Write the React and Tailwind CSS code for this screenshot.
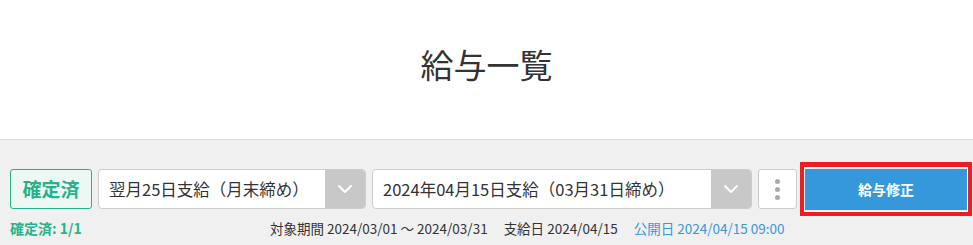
export default function App() {
  const font = { fontFamily: '"Noto Sans CJK JP", "Noto Sans", sans-serif' };
  return (
    <div className="w-[973px] h-[245px] bg-[#f0f0f0] overflow-hidden" style={font}>
      <div className="h-[140px] bg-white border-b border-[#dcdcdc] flex items-center justify-center pb-[10px]">
        <h1 className="text-[33px] leading-none text-[#333] font-normal">給与一覧</h1>
      </div>

      <div className="pl-[10px] pt-[29px]">
        <div className="flex items-center h-[40px]">
          <div className="w-[82px] h-[40px] flex items-center justify-center rounded-[3px] border border-[#26b389] bg-[#edf8f4] text-[#26b389] text-[19px] font-bold">
            確定済
          </div>

          <div className="ml-[6px] w-[268px] h-[40px] flex rounded-[4px] border border-[#cccccc] bg-white overflow-hidden">
            <div className="flex-1 flex items-center pl-[10px] text-[16.5px] text-[#333]">翌月25日支給（月末締め）</div>
            <div className="w-[40px] bg-[#c8c8c8] flex items-center justify-center">
              <svg width="16" height="10" viewBox="0 0 16 10" fill="none">
                <path d="M2 2l6 6 6-6" stroke="#fff" strokeWidth="2" strokeLinecap="round" strokeLinejoin="round" />
              </svg>
            </div>
          </div>

          <div className="ml-[6px] w-[380px] h-[40px] flex rounded-[4px] border border-[#cccccc] bg-white overflow-hidden">
            <div className="flex-1 flex items-center pl-[10px] text-[16.5px] text-[#333]">2024年04月15日支給（03月31日締め）</div>
            <div className="w-[40px] bg-[#c8c8c8] flex items-center justify-center">
              <svg width="16" height="10" viewBox="0 0 16 10" fill="none">
                <path d="M2 2l6 6 6-6" stroke="#fff" strokeWidth="2" strokeLinecap="round" strokeLinejoin="round" />
              </svg>
            </div>
          </div>

          <button className="ml-[6px] w-[39px] h-[40px] rounded-[3px] border border-[#cccccc] bg-white flex flex-col items-center justify-center gap-[3px]">
            <span className="w-[5px] h-[5px] rounded-full bg-[#aaa]" />
            <span className="w-[5px] h-[5px] rounded-full bg-[#aaa]" />
            <span className="w-[5px] h-[5px] rounded-full bg-[#aaa]" />
          </button>

          <button className="relative ml-[8px] w-[162px] h-[41px] mt-[1px] bg-[#3498db] text-white text-[14px] font-bold">
            給与修正
            <span className="absolute -top-[7px] -left-[5px] -right-[5px] -bottom-[6px] border-[4px] border-t-[5px] border-[#ee1c25] shadow-[inset_0_0_0_1px_#fff] pointer-events-none" />
          </button>
        </div>

        <div className="flex items-center mt-[11px] text-[13.5px] leading-[16px]">
          <div className="w-[260px] text-[#26b389] font-bold text-[14px]">確定済: 1/1</div>
          <div className="flex gap-4 text-[#333]">
            <span>対象期間 2024/03/01 〜 2024/03/31</span>
            <span>支給日 2024/04/15</span>
            <span className="text-[#3a97d9]">公開日 2024/04/15 09:00</span>
          </div>
        </div>
      </div>
    </div>
  );
}
